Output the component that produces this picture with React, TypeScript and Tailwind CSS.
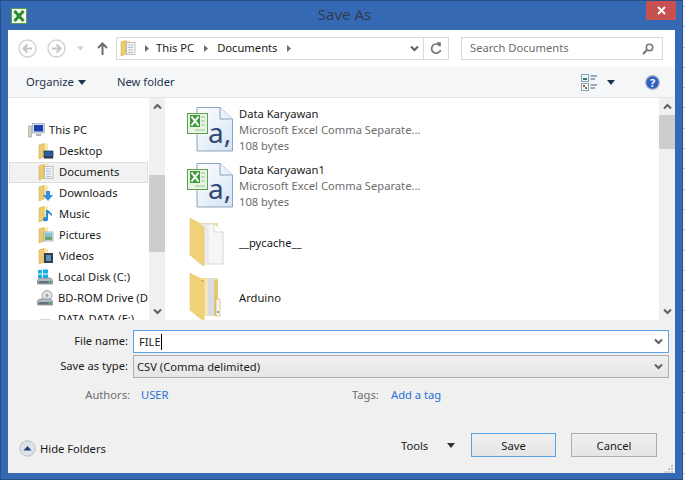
const font = { fontFamily: '"Noto Sans", sans-serif' };

function Chevron({ up = false, className = "" }: { up?: boolean; className?: string }) {
  return (
    <svg width="9" height="7" viewBox="0 0 9 7" className={className}>
      <path d={up ? "M1 5.5 L4.5 2 L8 5.5" : "M1 1.5 L4.5 5 L8 1.5"} fill="none" stroke="#5f5f5f" strokeWidth="2" />
    </svg>
  );
}

function Tri({ color = "#1f3350", w = 8 }: { color?: string; w?: number }) {
  return (
    <svg width={w} height="5" viewBox="0 0 8 5">
      <path d="M0 0 H8 L4 5 Z" fill={color} />
    </svg>
  );
}

function Crumb() {
  return (
    <svg width="4" height="7" viewBox="0 0 4 7">
      <path d="M0 0 L4 3.5 L0 7 Z" fill="#6f6f6f" />
    </svg>
  );
}

function NavCircle({ dir }: { dir: "l" | "r" }) {
  return (
    <svg width="19" height="19" viewBox="0 0 19 19">
      <circle cx="9.5" cy="9.5" r="8.5" fill="#fff" stroke="#d2d2d2" strokeWidth="1.4" />
      <path
        d={dir === "l" ? "M14 9.5 H6 M9.5 5.5 L5.5 9.5 L9.5 13.5" : "M5 9.5 H13 M9.5 5.5 L13.5 9.5 L9.5 13.5"}
        fill="none"
        stroke="#c4c4c4"
        strokeWidth="2"
      />
    </svg>
  );
}

function SmallFolder({ children }: { children?: React.ReactNode }) {
  return (
    <svg width="16" height="17" viewBox="0 0 16 17" className="shrink-0">
      <path d="M1 2 L6 0.5 H10 V14 H5 L1 16 Z" fill="#f8e7a8" />
      <path d="M1 2 L6 0.5 V14 L1 16 Z" fill="#eccb70" stroke="#cfa94f" strokeWidth="0.5" />
      {children}
    </svg>
  );
}

function DocOverlay() {
  return (
    <>
      <rect x="6.5" y="2.5" width="8.5" height="12" fill="#f4f4f4" stroke="#a9a9a9" strokeWidth="0.7" />
      <path d="M8 5 H13 M8 7.5 H13 M8 10 H13 M8 12.5 H13" stroke="#9fb4cc" strokeWidth="0.8" />
    </>
  );
}

const navItems: { label: string; overlay: React.ReactNode; selected?: boolean }[] = [
  { label: "Desktop", overlay: <><rect x="6" y="8" width="9" height="6" fill="#2b5d9c" stroke="#24354d" strokeWidth="0.7" /><rect x="6" y="14" width="9" height="1.5" fill="#333" /></> },
  { label: "Documents", overlay: <DocOverlay />, selected: true },
  { label: "Downloads", overlay: <path d="M8 6 H12 V10 H15 L10 16 L5 10 H8 Z" fill="#2f8fe0" /> },
  { label: "Music", overlay: <path d="M10 4 V13 A2.5 2.2 0 1 1 8 11 V4 Z M10 4 L14 8 V10 L10 7 Z" fill="#2a86d8" /> },
  { label: "Pictures", overlay: <><rect x="6" y="5" width="9" height="9" fill="#e9f0ef" stroke="#8b9aa5" strokeWidth="0.7" /><rect x="7" y="6" width="7" height="3.5" fill="#7fc0de" /><rect x="7" y="9.5" width="7" height="3.5" fill="#72a06e" /></> },
  { label: "Videos", overlay: <><rect x="6" y="5" width="9" height="10" fill="#33404c" /><rect x="8" y="7" width="5" height="6" fill="#5b93c0" /></> },
];

function DiskIcon({ kind }: { kind: "win" | "bd" | "plain" }) {
  return (
    <svg width="17" height="17" viewBox="0 0 17 17" className="shrink-0">
      {kind === "win" && <path d="M1 1 H5 V4.5 H1 Z M6 0.5 H11 V4.5 H6 Z M1 5.5 H5 V9 H1 Z M6 5.5 H11 V9.5 H6 Z" fill="#19aee4" />}
      {kind === "bd" && <circle cx="10" cy="5.5" r="5" fill="#dfe3e6" stroke="#8d9296" strokeWidth="0.8" />}
      {kind === "bd" && <circle cx="10" cy="5.5" r="1.4" fill="#9aa0a6" />}
      <path d="M2.5 9 H13.5 L15.5 11 V15 H0.5 V11 Z" fill="#aeb9c1" stroke="#6e7a84" strokeWidth="0.6" />
      <rect x="1.5" y="12" width="13" height="2.5" fill="#63727d" />
      <rect x="11.5" y="12.5" width="2" height="1.4" fill="#5fd35f" />
    </svg>
  );
}

function ExcelDoc() {
  return (
    <svg width="46" height="45" viewBox="0 0 46 45" className="shrink-0">
      <defs>
        <linearGradient id="pg" x1="0" y1="0" x2="1" y2="1">
          <stop offset="0" stopColor="#ffffff" />
          <stop offset="1" stopColor="#d5e4f3" />
        </linearGradient>
      </defs>
      <path d="M10 0.5 H33 L45.5 12 V44 H10 Z" fill="url(#pg)" stroke="#8ba3bd" strokeWidth="1" />
      <path d="M33 0.5 V12 H45.5" fill="#eef3f9" stroke="#8ba3bd" strokeWidth="1" />
      <text x="21" y="36" fontSize="28" fill="#2e4a72" style={font}>a,</text>
      <rect x="0.5" y="6.5" width="20" height="20" fill="#eaf4e6" stroke="#5e9d4c" strokeWidth="1" />
      <rect x="3" y="8" width="10" height="12" fill="#3f9a3a" />
      <path d="M4.5 9.5 L11.5 18.5 M11.5 9.5 L4.5 18.5" stroke="#fff" strokeWidth="2" />
      <path d="M14 10 H18 M14 14 H18 M14 18 H18 M8 23 H18" stroke="#93c48a" strokeWidth="1" />
    </svg>
  );
}

function BigFolder({ papers }: { papers: boolean }) {
  return (
    <svg width="40" height="48" viewBox="0 0 40 48" className="shrink-0">
      <path d="M3 0 L14 5 H31 V38 H10 Z" fill="#f5dc8f" />
      {papers ? (
        <>
          <rect x="13" y="7" width="6" height="35" fill="#c9a456" />
          <rect x="17" y="6" width="5" height="37" fill="#f3e5b5" />
          <rect x="21" y="5" width="7" height="38" fill="#d9dde2" />
          <rect x="27" y="7" width="4" height="36" fill="#e6c873" />
          <rect x="29" y="26" width="4" height="17" fill="#f6f6f0" stroke="#c9a456" strokeWidth="0.6" />
          <circle cx="31" cy="39" r="1" fill="#3f8fe0" />
        </>
      ) : (
        <>
          <path d="M13 6 H27 L36 14 V46 H13 Z" fill="#f6f6f6" stroke="#d5d5d5" strokeWidth="1" />
          <path d="M27 6 V14 H36" fill="#fff" stroke="#cfcfcf" strokeWidth="0.8" />
          <rect x="13" y="7" width="9" height="38" fill="#e6e6e6" opacity="0.6" />
        </>
      )}
      <path d="M3 0 L10 5 L17 9 V48 L10 43 L3 37 Z" fill="#f2d279" stroke="#e3bd5f" strokeWidth="0.5" />
    </svg>
  );
}

function FileRow({ name }: { name: string }) {
  return (
    <div className="flex h-[56px] shrink-0 items-start gap-[6px]">
      <div className="pt-[1px]"><ExcelDoc /></div>
      <div className="flex flex-col text-[#6d6d6d]">
        <span className="leading-[16px] text-[#1a1a1a]">{name}</span>
        <span className="leading-[16px]">Microsoft Excel Comma Separate...</span>
        <span className="leading-[15px]">108 bytes</span>
      </div>
    </div>
  );
}

function FolderRow({ name, papers }: { name: string; papers: boolean }) {
  return (
    <div className="flex h-[55px] shrink-0 items-start gap-[12px]">
      <BigFolder papers={papers} />
      <span className="pt-[17px] leading-[16px]">{name}</span>
    </div>
  );
}

function VScroll({ thumbTop, thumbHeight }: { thumbTop: number; thumbHeight: number }) {
  return (
    <div className="flex w-[16px] shrink-0 flex-col items-center bg-[#f0f0f0]">
      <div className="flex h-[17px] items-center justify-center"><Chevron up /></div>
      <div className="w-full flex-1">
        <div className="w-full bg-[#cdcdcd]" style={{ marginTop: thumbTop, height: thumbHeight }} />
      </div>
      <div className="flex h-[17px] items-center justify-center"><Chevron /></div>
    </div>
  );
}

export default function App() {
  return (
    <div className="flex h-[480px] w-[685px] overflow-hidden bg-[#f6f6f6] text-[11.2px] text-[#1a1a1a]" style={font}>
      <div className="flex h-[480px] w-[683px] shrink-0 flex-col border border-[#2a4f86] bg-[#3669b4] pb-[6px] pl-[7px] pr-[7px]">
        {/* title bar */}
        <div className="flex h-[29px] shrink-0 items-start">
          <svg width="17" height="17" viewBox="0 0 17 17" className="ml-[3px] mt-[7px]">
            <rect x="0.5" y="0.5" width="15" height="15" fill="#f1f7ec" stroke="#5a9a48" />
            <path d="M3.5 3 L12.5 13 M12.5 3 L3.5 13" stroke="#2f8a2f" strokeWidth="3" />
          </svg>
          <div className="flex-1 pl-[15px] pt-[3px] text-center text-[15px] leading-[20px] text-[#2f3b50]">Save As</div>
          <div className="mr-[-1px] flex h-[19px] w-[30px] items-center justify-center bg-[#c75050]">
            <svg width="9" height="9" viewBox="0 0 9 9"><path d="M1 1 L8 8 M8 1 L1 8" stroke="#fff" strokeWidth="2" /></svg>
          </div>
        </div>

        <div className="flex min-h-0 flex-1 flex-col bg-white">
          {/* nav row */}
          <div className="flex h-[37px] shrink-0 items-center pl-[10px]">
            <NavCircle dir="l" />
            <div className="ml-[10px]"><NavCircle dir="r" /></div>
            <div className="ml-[11px]"><Tri color="#d4d4d4" w={7} /></div>
            <svg width="11" height="13" viewBox="0 0 11 13" className="ml-[13px]">
              <path d="M5.5 13 V2 M1 6 L5.5 1.5 L10 6" fill="none" stroke="#6d6d6d" strokeWidth="2" />
            </svg>
            <div className="ml-[8px] flex h-[23px] w-[333px] items-center border border-[#d9d9d9]">
              <div className="ml-[3px] flex"><SmallFolder><DocOverlay /></SmallFolder></div>
              <div className="ml-[9px]"><Crumb /></div>
              <span className="ml-[7px]">This PC</span>
              <div className="ml-[10px]"><Crumb /></div>
              <span className="ml-[9px]">Documents</span>
              <div className="ml-[10px]"><Crumb /></div>
              <div className="ml-auto mr-[4px]"><Chevron /></div>
              <div className="flex h-full w-[25px] items-center justify-center border-l border-[#d9d9d9]">
                <svg width="12" height="13" viewBox="0 0 12 13">
                  <path d="M10 4 A4.6 4.6 0 1 0 10.6 8" fill="none" stroke="#707070" strokeWidth="1.7" />
                  <path d="M6.5 0 L11 0.5 L10.5 5 Z" fill="#707070" />
                </svg>
              </div>
            </div>
            <div className="ml-[12px] flex h-[23px] w-[202px] items-center border border-[#d9d9d9] pl-[8px] pr-[8px] text-[#6d6d6d]">
              <span>Search Documents</span>
              <svg width="12" height="12" viewBox="0 0 12 12" className="ml-auto">
                <circle cx="7.5" cy="4.5" r="3.2" fill="none" stroke="#777" strokeWidth="1.6" />
                <path d="M5 7 L1 11" stroke="#777" strokeWidth="2.2" />
              </svg>
            </div>
          </div>

          {/* command bar */}
          <div className="flex h-[31px] shrink-0 items-center border-b border-[#e5e5e5] bg-[#f5f6f7] pl-[18px] text-[#1f3350]">
            <span className="w-[52px]">Organize</span>
            <Tri />
            <span className="ml-[31px]">New folder</span>
            <svg width="17" height="17" viewBox="0 0 17 17" className="ml-auto">
              <rect x="0.5" y="0.5" width="7" height="7" fill="#eef5f9" stroke="#8aa0b5" />
              <rect x="2" y="4" width="4" height="2" fill="#2f7f5f" />
              <rect x="0.5" y="9.5" width="7" height="7" fill="#eef5f9" stroke="#8aa0b5" />
              <rect x="2" y="11" width="2" height="2" fill="#d23c2f" />
              <rect x="4" y="13" width="2" height="2" fill="#3f9a3a" />
              <path d="M9.5 2 H16 M9.5 5 H14 M9.5 11 H16 M9.5 14 H14" stroke="#3e5a80" strokeWidth="1" />
            </svg>
            <div className="ml-[9px]"><Tri /></div>
            <svg width="15" height="15" viewBox="0 0 15 15" className="ml-[30px] mr-[15px]">
              <circle cx="7.5" cy="7.5" r="6.8" fill="#2f62c0" stroke="#a9b3c2" strokeWidth="1.2" />
              <text x="7.5" y="11.5" textAnchor="middle" fontSize="11" fontWeight="700" fill="#fff" style={font}>?</text>
            </svg>
          </div>

          {/* body */}
          <div className="flex h-[222px] shrink-0">
            <div className="flex w-[141px] shrink-0 flex-col overflow-hidden pl-[1px] pt-[22px] pr-[1px]">
              <div className="flex h-[21px] shrink-0 items-center gap-[4px] pl-[19px]">
                <svg width="17" height="15" viewBox="0 0 17 15" className="shrink-0">
                  <rect x="0.5" y="3" width="3" height="11" fill="#cfd6c8" stroke="#7d8a78" strokeWidth="0.5" />
                  <rect x="4.5" y="0.5" width="12" height="9.5" fill="#d9dfe6" stroke="#8a949e" strokeWidth="0.6" />
                  <rect x="6" y="2" width="9" height="6.5" fill="#1b3fb0" />
                  <path d="M8 13 H13 V11 H8 Z" fill="#aab2ba" />
                </svg>
                <span>This PC</span>
              </div>
              {navItems.map((item) => (
                <div
                  key={item.label}
                  className={`flex h-[21px] shrink-0 items-center gap-[5px] ${item.selected ? "border border-[#dedede] bg-[#f2f2f2] pl-[28px]" : "pl-[29px]"}`}
                >
                  <SmallFolder>{item.overlay}</SmallFolder>
                  <span>{item.label}</span>
                </div>
              ))}
              <div className="flex h-[21px] shrink-0 items-center gap-[4px] pl-[28px]"><DiskIcon kind="win" /><span>Local Disk (C:)</span></div>
              <div className="flex h-[21px] shrink-0 items-center gap-[4px] pl-[28px]"><DiskIcon kind="bd" /><span className="whitespace-nowrap">BD-ROM Drive (D</span></div>
              <div className="flex h-[21px] shrink-0 items-center gap-[4px] pl-[28px]"><DiskIcon kind="plain" /><span className="whitespace-nowrap">DATA-DATA (E:)</span></div>
            </div>
            <VScroll thumbTop={60} thumbHeight={77} />

            <div className="flex min-w-0 flex-1 flex-col overflow-hidden pl-[22px] pt-[8px]">
              <FileRow name="Data Karyawan" />
              <FileRow name="Data Karyawan1" />
              <FolderRow name="__pycache__" papers={false} />
              <FolderRow name="Arduino" papers />
            </div>
            <VScroll thumbTop={0} thumbHeight={34} />
          </div>

          {/* form */}
          <div className="flex min-h-0 flex-1 flex-col bg-[#f0f0f0] pl-[11px] pr-[6px] pt-[10px]">
            <div className="grid grid-cols-[109px_1fr] items-center gap-x-[5px] gap-y-[2px]">
              <span className="text-right">File name:</span>
              <div className="flex h-[23px] items-center border border-[#5aa2e6] bg-white pl-[5px] pr-[5px]">
                <span className="border-r border-black leading-[16px]">FILE</span>
                <div className="ml-auto"><Chevron /></div>
              </div>
              <span className="text-right">Save as type:</span>
              <div className="flex h-[23px] items-center border border-[#adadad] bg-gradient-to-b from-[#f0f0f0] to-[#e5e5e5] pl-[3px] pr-[5px]">
                <span className="pt-[1px]">CSV (Comma delimited)</span>
                <div className="ml-auto"><Chevron /></div>
              </div>
            </div>
            <div className="mt-[8px] flex h-[20px] items-center text-[#6d6d6d]">
              <span className="w-[111px] text-right">Authors:</span>
              <span className="ml-[11px] w-[211px] text-[#2b6fd1]">USER</span>
              <span className="w-[39px]">Tags:</span>
              <span className="text-[#2b6fd1]">Add a tag</span>
            </div>
            <div className="mt-[29px] flex items-start">
              <div className="mt-[3px] flex h-[24px] w-[382px] items-center">
                <svg width="17" height="17" viewBox="0 0 17 17">
                  <circle cx="8.5" cy="8.5" r="7.7" fill="#dfe3e8" stroke="#b6bfc9" />
                  <path d="M4.5 10.5 L8.5 6 L12.5 10.5 Z" fill="#1f3f77" />
                </svg>
                <span className="ml-[4px] pt-[2px]">Hide Folders</span>
              </div>
              <span className="flex h-[24px] w-[46px] items-center pt-[2px]">Tools</span>
              <div className="flex h-[24px] w-[8px] items-center"><Tri color="#333" /></div>
              <div className="ml-[16px] flex h-[24px] w-[85px] items-center justify-center border border-[#5aa2e6] bg-gradient-to-b from-[#f0f0f0] to-[#e5e5e5] pt-[2px]">Save</div>
              <div className="ml-[15px] flex h-[24px] w-[86px] items-center justify-center border border-[#adadad] bg-gradient-to-b from-[#f0f0f0] to-[#e5e5e5] pt-[2px]">Cancel</div>
            </div>
            <div className="mr-[-4px] mt-[4px] flex justify-end">
              <svg width="9" height="9" viewBox="0 0 9 9">
                <path d="M7 1 h2 v2 h-2 Z M4 4 h2 v2 h-2 Z M7 4 h2 v2 h-2 Z M1 7 h2 v2 h-2 Z M4 7 h2 v2 h-2 Z M7 7 h2 v2 h-2 Z" fill="#c4c4c4" />
              </svg>
            </div>
          </div>
        </div>
      </div>
      <div className="flex flex-1 flex-col justify-between py-[6px]">
        {Array.from({ length: 24 }).map((_, i) => (
          <div key={i} className="h-[1px] bg-[#c8c8c8]" />
        ))}
      </div>
    </div>
  );
}
